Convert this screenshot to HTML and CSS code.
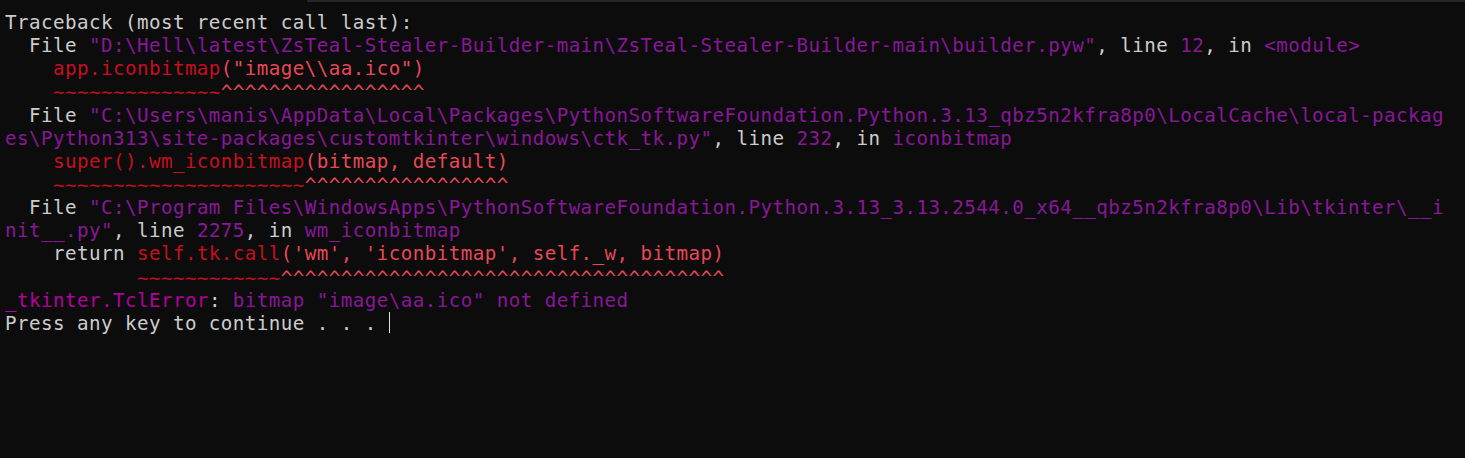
FILE: index.html
```html
<!DOCTYPE html>
<html lang="en">
<head>
<meta charset="utf-8">
<title>Terminal</title>
<link rel="stylesheet" href="styles.css">
</head>
<body>
<div class="window">
<div class="topbar"><div class="topbar-gap"></div><div class="topbar-edge"></div></div>
<div class="term">
<div class="ln">Traceback (most recent call last):</div>
<div class="ln">  File <span class="m">"D:\Hell\latest\ZsTeal-Stealer-Builder-main\ZsTeal-Stealer-Builder-main\builder.pyw"</span>, line <span class="m">12</span>, in <span class="m">&lt;module&gt;</span></div>
<div class="ln">    <span class="r">app.iconbitmap</span><span class="br">("image\\aa.ico")</span></div>
<div class="ln marks">    <span class="r">~~~~~~~~~~~~~~</span><span class="br">^^^^^^^^^^^^^^^^^</span></div>
<div class="ln">  File <span class="m">"C:\Users\manis\AppData\Local\Packages\PythonSoftwareFoundation.Python.3.13_qbz5n2kfra8p0\LocalCache\local-packag</span></div>
<div class="ln"><span class="m">es\Python313\site-packages\customtkinter\windows\ctk_tk.py"</span>, line <span class="m">232</span>, in <span class="m">iconbitmap</span></div>
<div class="ln">    <span class="r">super().wm_iconbitmap</span><span class="br">(bitmap, default)</span></div>
<div class="ln marks">    <span class="r">~~~~~~~~~~~~~~~~~~~~~</span><span class="br">^^^^^^^^^^^^^^^^^</span></div>
<div class="ln">  File <span class="m">"C:\Program Files\WindowsApps\PythonSoftwareFoundation.Python.3.13_3.13.2544.0_x64__qbz5n2kfra8p0\Lib\tkinter\__i</span></div>
<div class="ln"><span class="m">nit__.py"</span>, line <span class="m">2275</span>, in <span class="m">wm_iconbitmap</span></div>
<div class="ln">    return <span class="r">self.tk.call</span><span class="br">('wm', 'iconbitmap', self._w, bitmap)</span></div>
<div class="ln marks">           <span class="r">~~~~~~~~~~~~</span><span class="br">^^^^^^^^^^^^^^^^^^^^^^^^^^^^^^^^^^^^^</span></div>
<div class="ln"><span class="bm">_tkinter.TclError</span>: <span class="m">bitmap "image\aa.ico" not defined</span></div>
<div class="ln">Press any key to continue . . . <span class="cursor"></span></div>
</div>
</div>
</body>
</html>
```
FILE: styles.css
```css
html, body {
  margin: 0;
  padding: 0;
  background: #0c0c0c;
}

.window {
  width: 1465px;
  height: 458px;
  background: #0c0c0c;
  overflow: hidden;
  display: flex;
  flex-direction: column;
}

.topbar {
  display: flex;
  height: 2px;
  flex: none;
}

.topbar-gap {
  width: 307px;
}

.topbar-edge {
  flex: 1;
  background: #262626;
}

.term {
  padding: 9px 0 0 5px;
  font-family: "DejaVu Sans Mono", "Liberation Mono", monospace;
  font-size: 19.2px;
  letter-spacing: 0.44px;
  line-height: 23.15px;
  color: #cccccc;
}

.ln {
  white-space: pre;
  height: 23.15px;
}

.ln.marks {
  padding-top: 3px;
  height: 20.15px;
  line-height: 20.15px;
}

.m {
  color: #881798;
}

.bm {
  color: #b4009e;
}

.r {
  color: #c50f1f;
}

.br {
  color: #e74856;
}

.cursor {
  display: inline-block;
  width: 1px;
  height: 21px;
  background: #e0e0e0;
  vertical-align: top;
}
```
